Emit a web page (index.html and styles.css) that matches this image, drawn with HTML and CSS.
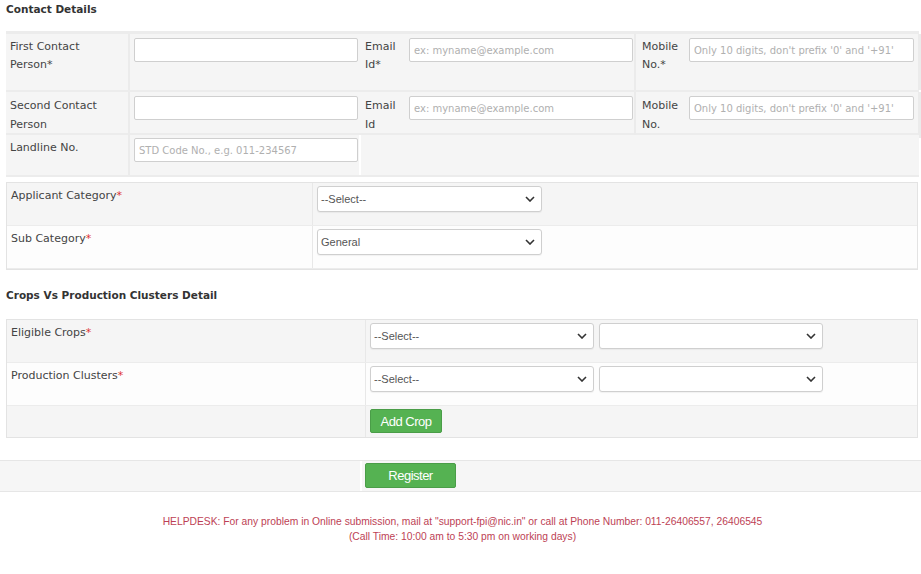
FILE: index.html
```html
<!DOCTYPE html>
<html>
<head>
<meta charset="utf-8">
<link rel="stylesheet" href="styles.css">
</head>
<body>
<div class="page">
  <h3 class="sec-title">Contact Details</h3>
  <div class="contact">
    <div class="crow r1">
      <div class="c lab l1">First Contact Person*</div>
      <div class="c in1"><input class="txt" type="text"></div>
      <div class="c lab l2">Email Id*</div>
      <div class="c in2"><input class="txt" type="text" placeholder="ex: myname@example.com"></div>
      <div class="c lab l3">Mobile No.*</div>
      <div class="c in3"><input class="txt" type="text" placeholder="Only 10 digits, don't prefix '0' and '+91'"></div>
    </div>
    <div class="crow r2">
      <div class="c lab l1">Second Contact Person</div>
      <div class="c in1"><input class="txt" type="text"></div>
      <div class="c lab l2">Email Id</div>
      <div class="c in2"><input class="txt" type="text" placeholder="ex: myname@example.com"></div>
      <div class="c lab l3">Mobile No.</div>
      <div class="c in3"><input class="txt" type="text" placeholder="Only 10 digits, don't prefix '0' and '+91'"></div>
    </div>
    <div class="crow r3">
      <div class="c lab l1">Landline No.</div>
      <div class="c in1"><input class="txt" type="text" placeholder="STD Code No., e.g. 011-234567"></div>
      <div class="c rest"></div>
    </div>
  </div>

  <div class="box cat">
    <div class="brow grey">
      <div class="bl">Applicant Category<span class="req">*</span></div>
      <div class="bv"><div class="sel"><span>--Select--</span><svg class="chev" viewBox="0 0 10 6"><path d="M1 1l4 4 4-4" fill="none" stroke="#333" stroke-width="1.6"/></svg></div></div>
    </div>
    <div class="brow white">
      <div class="bl">Sub Category<span class="req">*</span></div>
      <div class="bv"><div class="sel"><span>General</span><svg class="chev" viewBox="0 0 10 6"><path d="M1 1l4 4 4-4" fill="none" stroke="#333" stroke-width="1.6"/></svg></div></div>
    </div>
  </div>

  <h3 class="sec-title crops-title">Crops Vs Production Clusters Detail</h3>
  <div class="box crops">
    <div class="brow grey">
      <div class="bl">Eligible Crops<span class="req">*</span></div>
      <div class="bv pair">
        <div class="sel"><span>--Select--</span><svg class="chev" viewBox="0 0 10 6"><path d="M1 1l4 4 4-4" fill="none" stroke="#333" stroke-width="1.6"/></svg></div>
        <div class="sel"><span></span><svg class="chev" viewBox="0 0 10 6"><path d="M1 1l4 4 4-4" fill="none" stroke="#333" stroke-width="1.6"/></svg></div>
      </div>
    </div>
    <div class="brow white tall">
      <div class="bl">Production Clusters<span class="req">*</span></div>
      <div class="bv pair">
        <div class="sel"><span>--Select--</span><svg class="chev" viewBox="0 0 10 6"><path d="M1 1l4 4 4-4" fill="none" stroke="#333" stroke-width="1.6"/></svg></div>
        <div class="sel"><span></span><svg class="chev" viewBox="0 0 10 6"><path d="M1 1l4 4 4-4" fill="none" stroke="#333" stroke-width="1.6"/></svg></div>
      </div>
    </div>
    <div class="brow grey short">
      <div class="bl"></div>
      <div class="bv"><button class="btn add">Add Crop</button></div>
    </div>
  </div>

  <div class="regbar">
    <div class="regl"></div>
    <div class="regr"><button class="btn reg">Register</button></div>
  </div>

  <div class="help">
    <p>HELPDESK: For any problem in Online submission, mail at "support-fpi@nic.in" or call at Phone Number: 011-26406557, 26406545</p>
    <p>(Call Time: 10:00 am to 5:30 pm on working days)</p>
  </div>
</div>
</body>
</html>
```
FILE: styles.css
```css
* { box-sizing: border-box; }
html, body { margin: 0; padding: 0; background: #fff; }
body { font-family: "DejaVu Sans", Verdana, sans-serif; font-size: 11px; color: #444; }
.page { width: 921px; }

.sec-title {
  margin: 0;
  padding: 3px 6px 0;
  height: 31px;
  font-size: 10.5px;
  font-weight: bold;
  color: #333;
  line-height: 13px;
}

.contact {
  margin: 0 2px 0 6px;
  border-top: 3px solid #ececec;
  border-bottom: 2px solid #ececec;
  background: #ececec;
  display: flex;
  flex-direction: column;
  gap: 2px;
}
.crow {
  display: grid;
  grid-template-columns: 124px 231px 44px 231px 49px 1fr;
  background: #f5f5f5;
}
.r1 { height: 56px; }
.r2 { height: 41px; }
.r3 { height: 40px; grid-template-columns: 124px 231px 1fr; }
.c { padding: 4px 4px; }
.lab { line-height: 18px; }
.r2 .lab { line-height: 19px; padding-top: 3px; }
.l1 { padding-left: 4px; border-right: 2px solid #ebebeb; }
.in1 { padding-left: 4px; padding-top: 4px; }
.l2 { padding-left: 4px; padding-right: 0; }
.in2 { padding-left: 4px; padding-top: 4px; border-right: 2px solid #ebebeb; }
.l3 { padding-left: 6px; padding-right: 0; }
.in3 { padding-left: 4px; padding-top: 4px; border-right: 4px solid #ebebeb; }
.r2 .c { padding-top: 4px; }
.r3 .in1 { padding-top: 3px; border-right: 2px solid #fff; }
.rest { background: #f5f5f5; }

.txt {
  display: block;
  width: 224px;
  height: 24px;
  border: 1px solid #cfcfcf;
  border-radius: 2px;
  background: #fff;
  padding: 0 4px;
  font-family: "DejaVu Sans", sans-serif;
  font-size: 10px;
  color: #555;
  outline: none;
}
.in3 .txt { width: 225px; }
.txt::placeholder { color: #b0b0b0; }

.box {
  margin: 0 3px 0 6px;
  border: 1px solid #e3e3e3;
}
.cat { margin-top: 5px; }
.brow { display: grid; height: 42px; }
.cat .brow { grid-template-columns: 306px 1fr; }
.cat .brow.white { height: 44px; }
.crops .brow { grid-template-columns: 359px 1fr; }
.brow.grey { background: #f5f5f5; }
.brow.white { background: #fdfdfd; border-top: 1px solid #ececec; border-bottom: 1px solid #ececec; }
.crops .brow.tall { height: 44px; }
.crops .brow.short { height: 31px; }
.bl { padding: 6px 4px; line-height: 14px; border-right: 1px solid #e8e8e8; }
.req { color: #d33; }
.bv { padding: 3px 4px; display: flex; gap: 5px; }

.sel {
  width: 225px;
  height: 26px;
  border: 1px solid #cfcfcf;
  border-radius: 3px;
  background: #fff;
  display: flex;
  align-items: center;
  justify-content: space-between;
  padding: 0 6px 0 3px;
  font-family: "Liberation Sans", Arial, sans-serif;
  font-size: 11px;
  color: #555;
  box-shadow: 0 1px 1px rgba(0,0,0,0.05);
}
.crops .sel { width: 224px; }
.chev { width: 10px; height: 6px; }

.crops-title { padding-top: 19px; height: 49px; }

.btn {
  background: #55b252;
  border: 1px solid #4a9d48;
  border-radius: 2px;
  color: #fff;
  font-family: "Liberation Sans", Arial, sans-serif;
  font-size: 13px;
  padding: 0;
  letter-spacing: -0.5px;
}
.add { width: 72px; height: 24px; }

.regbar {
  margin-top: 22px;
  height: 32px;
  background: #f6f6f6;
  border-top: 1px solid #e6e6e6;
  border-bottom: 1px solid #e6e6e6;
  display: grid;
  grid-template-columns: 362px 1fr;
}
.regl { border-right: 2px solid #fff; }
.regr { padding: 2px 3px; }
.reg { width: 91px; height: 25px; }

.help {
  margin-top: 22px;
  text-align: center;
  font-family: "Liberation Sans", Arial, sans-serif;
  font-size: 10.3px;
  color: #bd3f55;
  padding-left: 4px;
}
.help p { margin: 0; line-height: 15px; }
```
